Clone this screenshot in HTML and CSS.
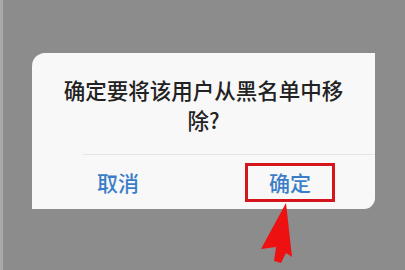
FILE: index.html
```html
<!DOCTYPE html>
<html lang="zh">
<head>
<meta charset="utf-8">
<link rel="stylesheet" href="styles.css">
</head>
<body>
<div class="dialog">
  <div class="title">确定要将该用户从黑名单中移除?</div>
  <div class="sep"></div>
  <div class="actions">
    <div class="btn cancel">取消</div>
    <div class="btn confirm">确定</div>
  </div>
</div>
<svg class="arrow" width="405" height="270" viewBox="0 0 405 270">
  <polygon points="283,203 289,257 283,253 278,263 271,261 273,247 258,249" fill="#ee1111"/>
</svg>
</body>
</html>
```
FILE: styles.css
```css
html, body {
  margin: 0;
  padding: 0;
}
body {
  width: 405px;
  height: 270px;
  background: #8c8c8c;
  border-left: 3px solid #a8a8a8;
  box-sizing: border-box;
  position: relative;
  overflow: hidden;
  font-family: "Noto Sans CJK SC", "Noto Sans", sans-serif;
  padding-top: 53px;
}
.dialog {
  margin-left: 29px;
  width: 343px;
  height: 156px;
  background: #f8f8f8;
  border-radius: 13px 0 11px 0;
  display: flex;
  flex-direction: column;
}
.title {
  padding: 22px 26px 0;
  font-size: 21.5px;
  line-height: 30px;
  font-weight: 500;
  color: #222;
  text-align: center;
}
.sep {
  margin: 19px 0 0 51px;
  height: 1px;
  background: #e4e4e4;
}
.actions {
  flex: 1;
  display: flex;
  align-items: center;
}
.btn {
  font-size: 21px;
  font-weight: 500;
  color: #3b7ec8;
  width: 90px;
  height: 39px;
  box-sizing: border-box;
  display: flex;
  align-items: center;
  justify-content: center;
}
.cancel {
  margin-left: 41px;
}
.confirm {
  margin-left: auto;
  margin-right: 40px;
  border: 3px solid #d4161c;
}
.arrow {
  position: absolute;
  left: 0;
  top: 0;
}
```
